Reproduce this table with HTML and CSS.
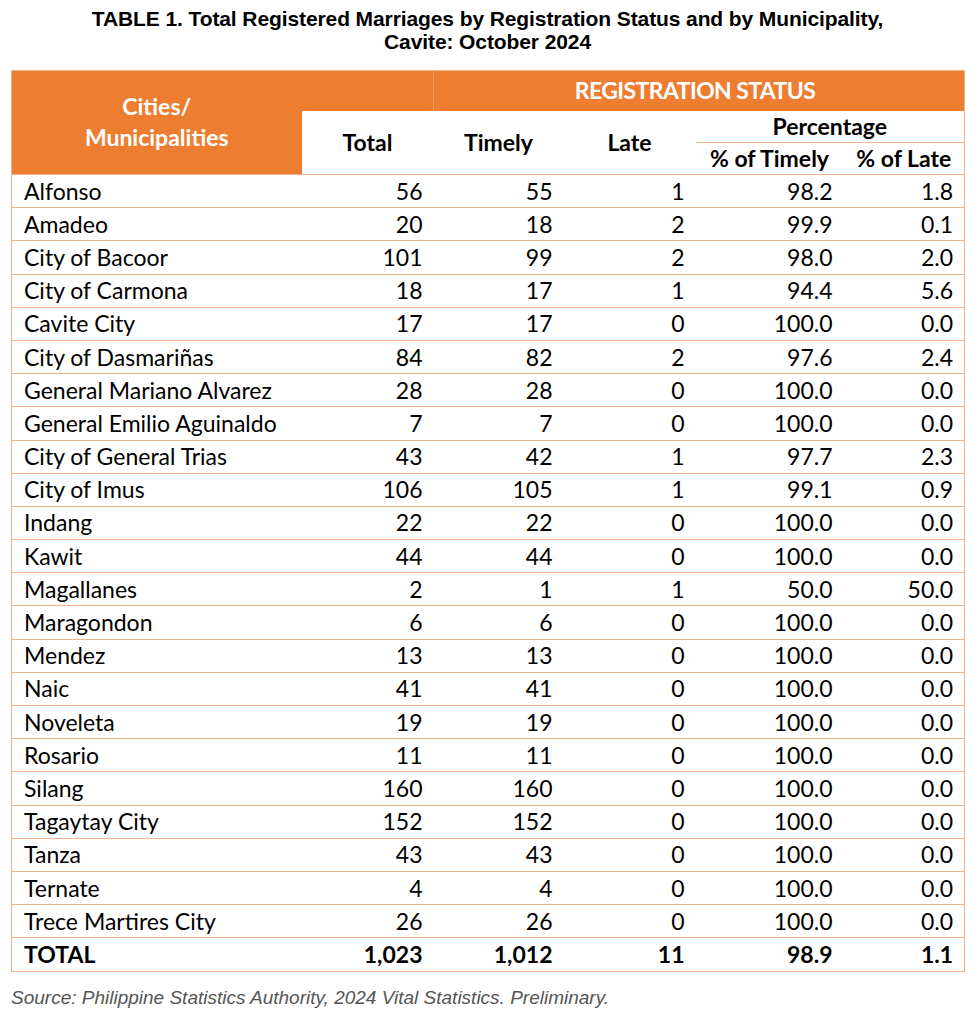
FILE: index.html
```html
<!DOCTYPE html>
<html>
<head>
<meta charset="utf-8">
<link rel="stylesheet" href="styles.css">
</head>
<body>
<div class="page">
  <h1 class="title">TABLE 1. Total Registered Marriages by Registration Status and by Municipality,<br>Cavite: October 2024</h1>
  <table class="tbl">
    <colgroup>
      <col class="c-name"><col class="c-total"><col class="c-timely"><col class="c-late"><col class="c-pt"><col class="c-pl">
    </colgroup>
    <thead>
      <tr class="h1">
        <th rowspan="3" class="hname">Cities/<br>Municipalities</th>
        <th class="horange"></th>
        <th colspan="4" class="horange hreg">REGISTRATION STATUS</th>
      </tr>
      <tr class="h2">
        <th rowspan="2" class="hw">Total</th>
        <th rowspan="2" class="hw">Timely</th>
        <th rowspan="2" class="hw">Late</th>
        <th colspan="2" class="hw hpct">Percentage</th>
      </tr>
      <tr class="h3">
        <th class="hw">% of Timely</th>
        <th class="hw">% of Late</th>
      </tr>
    </thead>
    <tbody>
      <tr><td>Alfonso</td><td>56</td><td>55</td><td>1</td><td>98.2</td><td>1.8</td></tr>
      <tr><td>Amadeo</td><td>20</td><td>18</td><td>2</td><td>99.9</td><td>0.1</td></tr>
      <tr><td>City of Bacoor</td><td>101</td><td>99</td><td>2</td><td>98.0</td><td>2.0</td></tr>
      <tr><td>City of Carmona</td><td>18</td><td>17</td><td>1</td><td>94.4</td><td>5.6</td></tr>
      <tr><td>Cavite City</td><td>17</td><td>17</td><td>0</td><td>100.0</td><td>0.0</td></tr>
      <tr><td>City of Dasmariñas</td><td>84</td><td>82</td><td>2</td><td>97.6</td><td>2.4</td></tr>
      <tr><td>General Mariano Alvarez</td><td>28</td><td>28</td><td>0</td><td>100.0</td><td>0.0</td></tr>
      <tr><td>General Emilio Aguinaldo</td><td>7</td><td>7</td><td>0</td><td>100.0</td><td>0.0</td></tr>
      <tr><td>City of General Trias</td><td>43</td><td>42</td><td>1</td><td>97.7</td><td>2.3</td></tr>
      <tr><td>City of Imus</td><td>106</td><td>105</td><td>1</td><td>99.1</td><td>0.9</td></tr>
      <tr><td>Indang</td><td>22</td><td>22</td><td>0</td><td>100.0</td><td>0.0</td></tr>
      <tr><td>Kawit</td><td>44</td><td>44</td><td>0</td><td>100.0</td><td>0.0</td></tr>
      <tr><td>Magallanes</td><td>2</td><td>1</td><td>1</td><td>50.0</td><td>50.0</td></tr>
      <tr><td>Maragondon</td><td>6</td><td>6</td><td>0</td><td>100.0</td><td>0.0</td></tr>
      <tr><td>Mendez</td><td>13</td><td>13</td><td>0</td><td>100.0</td><td>0.0</td></tr>
      <tr><td>Naic</td><td>41</td><td>41</td><td>0</td><td>100.0</td><td>0.0</td></tr>
      <tr><td>Noveleta</td><td>19</td><td>19</td><td>0</td><td>100.0</td><td>0.0</td></tr>
      <tr><td>Rosario</td><td>11</td><td>11</td><td>0</td><td>100.0</td><td>0.0</td></tr>
      <tr><td>Silang</td><td>160</td><td>160</td><td>0</td><td>100.0</td><td>0.0</td></tr>
      <tr><td>Tagaytay City</td><td>152</td><td>152</td><td>0</td><td>100.0</td><td>0.0</td></tr>
      <tr><td>Tanza</td><td>43</td><td>43</td><td>0</td><td>100.0</td><td>0.0</td></tr>
      <tr><td>Ternate</td><td>4</td><td>4</td><td>0</td><td>100.0</td><td>0.0</td></tr>
      <tr><td>Trece Martires City</td><td>26</td><td>26</td><td>0</td><td>100.0</td><td>0.0</td></tr>
      <tr class="total"><td>TOTAL</td><td>1,023</td><td>1,012</td><td>11</td><td>98.9</td><td>1.1</td></tr>
    </tbody>
  </table>
  <p class="source">Source: Philippine Statistics Authority, 2024 Vital Statistics. Preliminary.</p>
</div>
</body>
</html>
```
FILE: styles.css
```css
html, body {
  margin: 0;
  padding: 0;
  background: #fff;
}
.page {
  width: 953px;
  padding: 0 0 0 11px;
}
.title {
  margin: 0;
  padding-top: 7px;
  height: 70px;
  box-sizing: border-box;
  font-family: "Liberation Sans", Arial, sans-serif;
  font-weight: bold;
  font-size: 21px;
  line-height: 23px;
  letter-spacing: -0.1px;
  text-align: center;
  color: #000;
}
.tbl {
  width: 953px;
  border-collapse: collapse;
  table-layout: fixed;
  font-family: Lato, "Open Sans", sans-serif;
  font-size: 23px;
  color: #000;
  border: 1px solid #f0b48a;
}
.c-name { width: 290px; }
.c-total { width: 132px; }
.c-timely { width: 130px; }
.c-late { width: 132px; }
.c-pt { width: 148px; }
.c-pl { width: 121px; }
th {
  padding: 0;
  font-weight: bold;
  text-align: center;
  line-height: 1;
}
.h1 { height: 40px; }
.h2 { height: 32px; }
.h3 { height: 32px; }
.hname {
  background: #ed7d31;
  color: #fff;
  line-height: 31px;
  padding-bottom: 2px;
  border-bottom: 1px solid #f0b48a;
}
.horange {
  background: #ed7d31;
  color: #fff;
}
.hreg {
  border-left: 1px solid #f19a5e;
  letter-spacing: -0.6px;
  padding-right: 8px;
}
.hw {
  background: #fff;
  color: #000;
  border-bottom: 1px solid #f0b48a;
}
.hpct {
  border-bottom: 1px solid #f0b48a;
}
td {
  height: 33.2px;
  padding: 0 11px;
  text-align: right;
  border-bottom: 1px solid #f0b48a;
  white-space: nowrap;
  line-height: 1;
  box-sizing: border-box;
}
td:first-child {
  text-align: left;
  padding-left: 12px;
}
.total td {
  font-weight: bold;
}
.source {
  margin: 15px 0 0 0;
  font-family: "Liberation Sans", Arial, sans-serif;
  font-style: italic;
  font-size: 19px;
  line-height: 22px;
  color: #555;
}
```
